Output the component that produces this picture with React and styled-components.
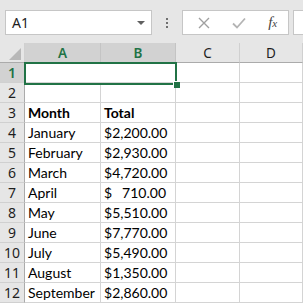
import React from 'react';
import styled, { createGlobalStyle } from 'styled-components';

const GlobalStyle = createGlobalStyle`
  html, body {
    margin: 0;
    padding: 0;
    background: #ffffff;
  }
  * {
    box-sizing: border-box;
  }
`;

const rows = [
  { merged: true },
  { a: '', b: null },
  { a: 'Month', b: 'Total', head: true },
  { a: 'January', b: '2,200.00' },
  { a: 'February', b: '2,930.00' },
  { a: 'March', b: '4,720.00' },
  { a: 'April', b: '710.00' },
  { a: 'May', b: '5,510.00' },
  { a: 'June', b: '7,770.00' },
  { a: 'July', b: '5,490.00' },
  { a: 'August', b: '1,350.00' },
  { a: 'September', b: '2,860.00' },
];

const columns = [
  { label: 'A', active: true },
  { label: 'B', active: true },
  { label: 'C' },
  { label: 'D' },
];

const renderB = r => {
  if (r.b === null) return <Cell />;
  if (r.head) return <Cell bold>{r.b}</Cell>;
  return (
    <Money>
      <span>$</span>
      <span>{r.b}</span>
    </Money>
  );
};

const App = () => {
  return (
    <Wrapper>
      <GlobalStyle />
      <Toolbar>
        <NameBox>
          <NameText>A1</NameText>
          <DropArrow />
        </NameBox>
        <Dots>
          <Dot />
          <Dot />
          <Dot />
        </Dots>
        <FormulaBox>
          <svg width="12" height="12" viewBox="0 0 12 12">
            <path d="M1 1 L11 11 M11 1 L1 11" stroke="#a0a0a0" strokeWidth="1.4" fill="none" />
          </svg>
          <svg width="14" height="12" viewBox="0 0 14 12">
            <path d="M1 6.5 L5 10.5 L13 1.5" stroke="#b4b4b4" strokeWidth="1.8" fill="none" />
          </svg>
          <Fx>
            f<sub>x</sub>
          </Fx>
        </FormulaBox>
        <EdgeBox />
      </Toolbar>
      <Sheet>
        <Corner>
          <svg width="12" height="12" viewBox="0 0 12 12">
            <path d="M12 0 L12 12 L0 12 Z" fill="#b8b8b8" />
          </svg>
        </Corner>
        {columns.map(c => (
          <ColHeader key={c.label} active={c.active}>
            {c.label}
          </ColHeader>
        ))}
        {rows.map((r, i) => (
          <React.Fragment key={i}>
            <RowHeader active={i === 0}>{i + 1}</RowHeader>
            {r.merged ? (
              <Cell span={2} />
            ) : (
              <>
                <Cell bold={r.head}>{r.a}</Cell>
                {renderB(r)}
              </>
            )}
            <Cell />
            <Cell />
          </React.Fragment>
        ))}
        <Selection>
          <Handle />
        </Selection>
      </Sheet>
    </Wrapper>
  );
};
export default App;

const Wrapper = styled.div`
  width: 303px;
  height: 305px;
  overflow: hidden;
  background: #ffffff;
`;

const Toolbar = styled.div`
  height: 43px;
  background: #e6e6e6;
  display: flex;
  align-items: flex-start;
  padding-top: 10px;
  padding-left: 5px;
`;

const NameBox = styled.div`
  width: 151px;
  height: 25px;
  background: #ffffff;
  border: 1px solid #c6c6c6;
  display: flex;
  align-items: center;
  justify-content: space-between;
  padding: 0 6px 0 6px;
`;

const NameText = styled.span`
  font-family: 'Noto Sans', sans-serif;
  font-size: 14px;
  color: #1e1e1e;
`;

const DropArrow = styled.span`
  width: 0;
  height: 0;
  border-left: 4px solid transparent;
  border-right: 4px solid transparent;
  border-top: 4px solid #606060;
`;

const Dots = styled.div`
  width: 31px;
  height: 25px;
  display: flex;
  flex-direction: column;
  align-items: center;
  justify-content: center;
  gap: 2px;
`;

const Dot = styled.span`
  width: 2px;
  height: 2px;
  background: #707070;
`;

const FormulaBox = styled.div`
  width: 109px;
  height: 25px;
  background: #ffffff;
  border: 1px solid #c6c6c6;
  display: flex;
  align-items: center;
  justify-content: space-between;
  padding: 0 11px 0 15px;
`;

const Fx = styled.span`
  font-family: 'Liberation Serif', serif;
  font-style: italic;
  font-size: 15px;
  color: #444444;
  sub {
    font-size: 11px;
    vertical-align: 0;
  }
`;

const EdgeBox = styled.div`
  margin-left: 4px;
  width: 10px;
  height: 25px;
  background: #ffffff;
  border: 1px solid #c6c6c6;
  border-right: none;
`;

const Sheet = styled.div`
  position: relative;
  display: grid;
  grid-template-columns: 25px 76px 75px 64px 63px;
  grid-auto-rows: 20px;
`;

const Corner = styled.div`
  background: #e6e6e6;
  border-right: 1px solid #d0d0d0;
  border-bottom: 1px solid #ababab;
  display: flex;
  align-items: flex-end;
  justify-content: flex-end;
  padding: 0 3px 2px 0;
`;

const ColHeader = styled.div`
  background: ${p => (p.active ? '#d2d2d2' : '#e6e6e6')};
  border-right: 1px solid ${p => (p.active ? '#c4c4c4' : '#d0d0d0')};
  border-bottom: 1px solid ${p => (p.active ? '#9f9f9f' : '#ababab')};
  display: flex;
  align-items: center;
  justify-content: center;
  font-family: 'Noto Sans', sans-serif;
  font-size: 13.5px;
  font-weight: ${p => (p.active ? 600 : 400)};
  color: ${p => (p.active ? '#217346' : '#1e1e1e')};
`;

const RowHeader = styled.div`
  background: ${p => (p.active ? '#d2d2d2' : '#e6e6e6')};
  border-right: 1px solid ${p => (p.active ? '#9f9f9f' : '#ababab')};
  border-bottom: 1px solid #d0d0d0;
  display: flex;
  align-items: center;
  justify-content: center;
  font-family: 'Noto Sans', sans-serif;
  font-size: 14px;
  font-weight: ${p => (p.active ? 600 : 400)};
  color: ${p => (p.active ? '#217346' : '#1e1e1e')};
`;

const Cell = styled.div`
  grid-column: span ${p => p.span || 1};
  border-right: 1px solid #d4d4d4;
  border-bottom: 1px solid #d4d4d4;
  display: flex;
  align-items: flex-end;
  padding: 0 0 1px 3px;
  font-family: 'Lato', sans-serif;
  font-size: 14px;
  font-weight: ${p => (p.bold ? 700 : 400)};
  color: #000000;
  white-space: nowrap;
  overflow: hidden;
`;

const Money = styled(Cell)`
  justify-content: space-between;
  padding-right: 9px;
`;

const Selection = styled.div`
  position: absolute;
  left: 24px;
  top: 19px;
  width: 153px;
  height: 23px;
  border: 2px solid #217346;
  pointer-events: none;
`;

const Handle = styled.span`
  position: absolute;
  right: -5px;
  bottom: -5px;
  width: 7px;
  height: 7px;
  background: #217346;
  border-left: 1px solid #ffffff;
  border-top: 1px solid #ffffff;
`;
